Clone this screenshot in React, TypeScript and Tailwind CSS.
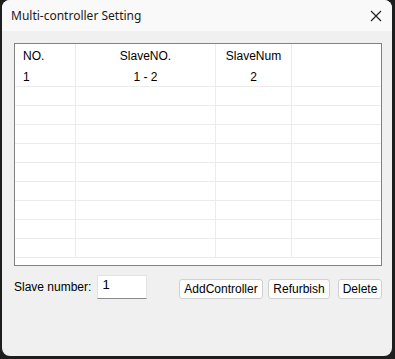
const COLS = [61, 140, 76, 88];
const EMPTY_ROWS = 10;

type Row = { no: string; slaveNo: string; slaveNum: string };

const rows: Row[] = [{ no: "1", slaveNo: "1 - 2", slaveNum: "2" }];

function CloseIcon() {
  return (
    <svg width="12" height="12" viewBox="0 0 12 12" className="text-[#1a1a1a]">
      <path d="M1 1 L11 11 M11 1 L1 11" stroke="currentColor" strokeWidth="1.1" fill="none" />
    </svg>
  );
}

function Cell({ w, align, last, children }: { w: number; align: "left" | "center"; last?: boolean; children?: React.ReactNode }) {
  return (
    <div
      style={{ width: w }}
      className={`shrink-0 h-full flex items-center ${align === "left" ? "justify-start pl-[8px]" : "justify-center"} ${last ? "" : "border-r border-[#ececec]"}`}
    >
      {children}
    </div>
  );
}

export default function App() {
  const blanks = EMPTY_ROWS - rows.length;
  return (
    <div className="w-[395px] h-[359px] bg-[#1e1e1e] overflow-hidden">
      <div className="ml-[2px] w-[390px] h-[356px] rounded-[8px] overflow-hidden bg-[#f0f0f0] flex flex-col">
        {/* title bar */}
        <div className="h-[31px] shrink-0 bg-[#f9f9f9] flex items-center justify-between pl-[9px] pr-[5px]">
          <span className="text-[12px] text-[#1a1a1a]" style={{ fontFamily: '"Noto Sans", sans-serif' }}>
            Multi-controller Setting
          </span>
          <span className="w-[22px] flex justify-center">
            <CloseIcon />
          </span>
        </div>

        <div className="flex-1 pt-[12px] px-[12px] text-[12px] text-black" style={{ fontFamily: '"Liberation Sans", Arial, sans-serif' }}>
          {/* list view */}
          <div className="w-[368px] h-[223px] border border-[#828282] bg-white overflow-hidden">
            <div className="h-[24px] flex">
              <Cell w={COLS[0]} align="left">NO.</Cell>
              <Cell w={COLS[1]} align="center">SlaveNO.</Cell>
              <Cell w={COLS[2]} align="center">SlaveNum</Cell>
              <Cell w={COLS[3]} align="center" last />
            </div>
            {rows.map((r) => (
              <div key={r.no} className="h-[19px] flex border-b border-[#ececec]">
                <Cell w={COLS[0]} align="left">{r.no}</Cell>
                <Cell w={COLS[1]} align="center">{r.slaveNo}</Cell>
                <Cell w={COLS[2]} align="center">{r.slaveNum}</Cell>
                <Cell w={COLS[3]} align="center" last />
              </div>
            ))}
            {Array.from({ length: blanks }).map((_, i) => (
              <div key={i} className="h-[19px] flex border-b border-[#ececec]">
                <Cell w={COLS[0]} align="left" />
                <Cell w={COLS[1]} align="center" />
                <Cell w={COLS[2]} align="center" />
                <Cell w={COLS[3]} align="center" last />
              </div>
            ))}
          </div>

          {/* bottom controls */}
          <div className="mt-[9px] flex items-end w-[368px]">
            <div className="flex items-center">
              <span>Slave number:</span>
              <div className="ml-[6px] w-[50px] h-[24px] bg-white border border-[#e3e3e3] border-b-[#8a8a8a] pl-[4px] pt-[1px] text-[13px] leading-[16px]">
                1
              </div>
            </div>
            <div className="ml-auto flex items-end">
              <button className="w-[84px] h-[20px] bg-[#fdfdfd] border border-[#d0d0d0] rounded-[3px] text-[12px]">AddController</button>
              <button className="ml-[5px] w-[62px] h-[20px] bg-[#fdfdfd] border border-[#d0d0d0] rounded-[3px] text-[12px]">Refurbish</button>
              <button className="ml-[8px] w-[44px] h-[20px] bg-[#fdfdfd] border border-[#d0d0d0] rounded-[3px] text-[12px]">Delete</button>
            </div>
          </div>
        </div>
      </div>
    </div>
  );
}
